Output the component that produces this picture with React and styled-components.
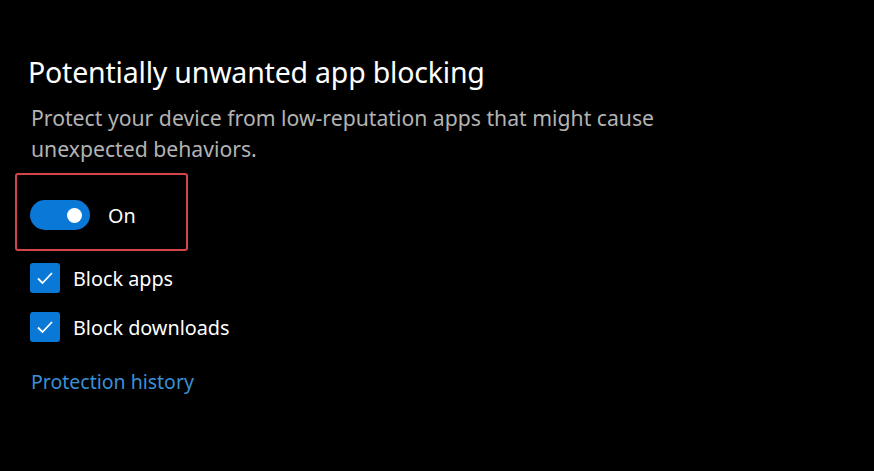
import styled, { createGlobalStyle } from "styled-components";

const Global = createGlobalStyle`
  html, body {
    margin: 0;
    background: #000;
  }
  body {
    font-family: "Noto Sans", "Open Sans", sans-serif;
    color: #fff;
  }
`;

const Page = styled.div`
  width: 874px;
  height: 471px;
  background: #000;
  padding: 50px 0 0 28px;
  box-sizing: border-box;
  display: flex;
  flex-direction: column;
`;

const Title = styled.h1`
  margin: 0;
  font-size: 28.5px;
  font-weight: 400;
  line-height: 44px;
  letter-spacing: -0.2px;
`;

const Desc = styled.p`
  margin: 8px 0 0 3px;
  width: 700px;
  font-size: 21.2px;
  line-height: 31px;
  color: #b3b3b3;
`;

const Highlight = styled.div`
  margin: 9px 0 0 -13px;
  width: 173px;
  height: 78px;
  box-sizing: border-box;
  border: 2px solid #d4444b;
  border-radius: 3px;
  display: flex;
  align-items: center;
  padding: 6px 0 0 13px;
`;

const Switch = styled.div`
  width: 60px;
  height: 30px;
  border-radius: 15px;
  background: #0a78d6;
  position: relative;
  flex-shrink: 0;
`;

const Knob = styled.span`
  position: absolute;
  right: 8px;
  top: 7.5px;
  width: 15px;
  height: 15px;
  border-radius: 50%;
  background: #fff;
`;

const Label = styled.span`
  font-size: 19.8px;
  color: #fff;
  margin-left: ${(p) => p.gap || 13}px;
`;

const Options = styled.div`
  display: flex;
  flex-direction: column;
  gap: 19px;
  margin: 12px 0 0 2px;
`;

const Row = styled.div`
  display: flex;
  align-items: center;
  height: 30px;
`;

const Box = styled.div`
  width: 30px;
  height: 30px;
  border-radius: 3px;
  background: #0a78d6;
  display: flex;
  align-items: center;
  justify-content: center;
`;

const Link = styled.a`
  margin: 26px 0 0 3px;
  font-size: 19.5px;
  color: #3b8fd6;
  text-decoration: none;
`;

function Check() {
  return (
    <Box>
      <svg width="20" height="20" viewBox="0 0 20 20">
        <path d="M3 10.5 L7.5 15 L17 5" fill="none" stroke="#fff" strokeWidth="1.8" />
      </svg>
    </Box>
  );
}

export default function App() {
  return (
    <>
      <Global />
      <Page>
        <Title>Potentially unwanted app blocking</Title>
        <Desc>
          Protect your device from low-reputation apps that might cause
          <br />
          unexpected behaviors.
        </Desc>
        <Highlight>
          <Switch>
            <Knob />
          </Switch>
          <Label gap={18}>On</Label>
        </Highlight>
        <Options>
          <Row>
            <Check />
            <Label>Block apps</Label>
          </Row>
          <Row>
            <Check />
            <Label>Block downloads</Label>
          </Row>
        </Options>
        <Link href="#">Protection history</Link>
      </Page>
    </>
  );
}
